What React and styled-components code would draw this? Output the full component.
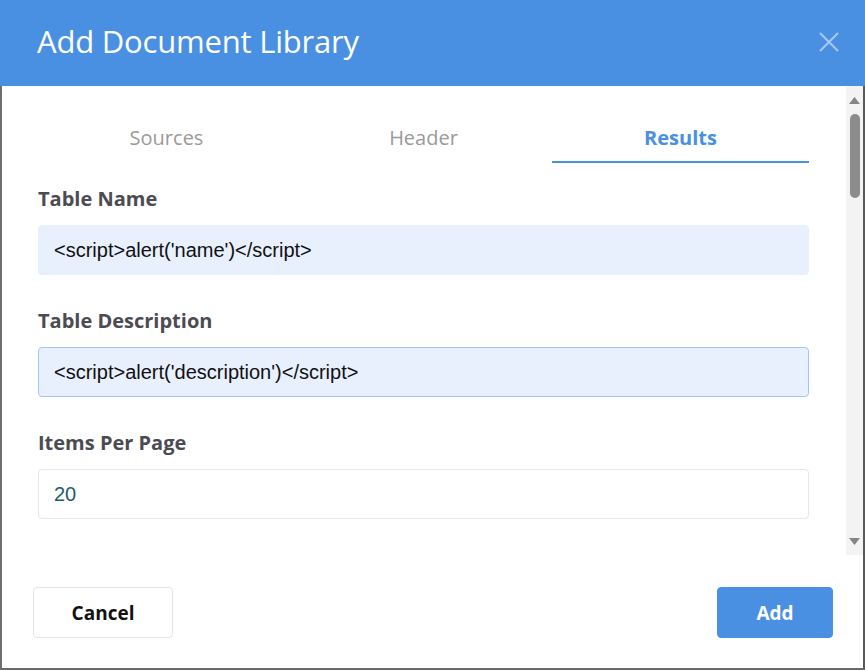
import styled, { createGlobalStyle } from "styled-components";

const GlobalStyle = createGlobalStyle`
  html, body {
    margin: 0;
    padding: 0;
    background: #fff;
  }
  * {
    box-sizing: border-box;
  }
`;

const tabs = ["Sources", "Header", "Results"];

const fields = [
  { label: "Table Name", value: "<script>alert('name')</script>", variant: "filled" },
  { label: "Table Description", value: "<script>alert('description')</script>", variant: "focused" },
  { label: "Items Per Page", value: "20", variant: "plain" },
];

export default function App() {
  return (
    <>
      <GlobalStyle />
      <Dialog>
        <Header>
          <Title>Add Document Library</Title>
          <CloseButton aria-label="Close">
            <svg width="22" height="22" viewBox="0 0 22 22">
              <path d="M2 2 L20 20 M20 2 L2 20" stroke="#a8c8f0" strokeWidth="2" fill="none" />
            </svg>
          </CloseButton>
        </Header>

        <Body>
          <ScrollArea>
            <Content>
              <TabRow>
                {tabs.map((t) => (
                  <Tab key={t} active={t === "Results"}>{t}</Tab>
                ))}
              </TabRow>

              {fields.map((f) => (
                <Field key={f.label}>
                  <Label>{f.label}</Label>
                  <Input variant={f.variant}>{f.value}</Input>
                </Field>
              ))}
            </Content>

            <Scrollbar>
              <Arrow>
                <svg width="11" height="7" viewBox="0 0 11 7"><path d="M5.5 0 L11 7 L0 7 Z" fill="#858585" /></svg>
              </Arrow>
              <Thumb />
              <Track />
              <Arrow>
                <svg width="11" height="7" viewBox="0 0 11 7"><path d="M0 0 L11 0 L5.5 7 Z" fill="#858585" /></svg>
              </Arrow>
            </Scrollbar>
          </ScrollArea>

          <Footer>
            <Button>Cancel</Button>
            <Button primary>Add</Button>
          </Footer>
        </Body>
      </Dialog>
    </>
  );
}

const Dialog = styled.div`
  width: 865px;
  height: 670px;
  display: flex;
  flex-direction: column;
  background: #fff;
`;

const Header = styled.div`
  height: 86px;
  flex-shrink: 0;
  background: #4a90e2;
  display: flex;
  align-items: center;
  justify-content: space-between;
  padding: 0 24px 0 37px;
`;

const Title = styled.h1`
  margin: 0 0 4px 0;
  font-family: "Open Sans", "Noto Sans", sans-serif;
  font-weight: 400;
  font-size: 31px;
  letter-spacing: -0.2px;
  color: #fff;
`;

const CloseButton = styled.div`
  display: flex;
  align-items: center;
  justify-content: center;
  width: 24px;
  height: 24px;
  margin-bottom: 2px;
`;

const Body = styled.div`
  flex: 1;
  display: flex;
  flex-direction: column;
  border-left: 2px solid #6e6e6e;
  border-right: 2px solid #5a5a5a;
  border-bottom: 2px solid #6a6a6a;
`;

const ScrollArea = styled.div`
  height: 469px;
  display: flex;
`;

const Content = styled.div`
  flex: 1;
  padding: 25px 37px 0 36px;
`;

const TabRow = styled.div`
  display: grid;
  grid-template-columns: repeat(3, 1fr);
  margin-bottom: 23px;
`;

const Tab = styled.div`
  height: 52px;
  display: flex;
  align-items: center;
  justify-content: center;
  padding-top: 2px;
  font-family: "Open Sans", "Noto Sans", sans-serif;
  font-size: 20px;
  font-weight: ${(p) => (p.active ? 700 : 400)};
  color: ${(p) => (p.active ? "#4a90e2" : "#9a9a9a")};
  border-bottom: 2px solid ${(p) => (p.active ? "#4a90e2" : "transparent")};
`;

const Field = styled.div`
  display: flex;
  flex-direction: column;
  margin-bottom: 33px;
`;

const Label = styled.label`
  height: 26px;
  line-height: 26px;
  margin-bottom: 13px;
  font-family: "Open Sans", "Noto Sans", sans-serif;
  font-size: 20px;
  font-weight: 700;
  color: #4b4b52;
`;

const Input = styled.div`
  height: 50px;
  display: flex;
  align-items: center;
  padding: 0 15px;
  border-radius: 4px;
  font-family: "Liberation Sans", Arial, sans-serif;
  font-size: 20px;
  color: ${(p) => (p.variant === "plain" ? "#1b5d6c" : "#111")};
  background: ${(p) => (p.variant === "plain" ? "#fff" : "#e8f0fe")};
  border: 1px solid
    ${(p) =>
      p.variant === "focused" ? "#a3c6f2" : p.variant === "plain" ? "#e6e6e6" : "#e8f0fe"};
`;

const Scrollbar = styled.div`
  width: 17px;
  background: #f3f3f3;
  display: flex;
  flex-direction: column;
  align-items: center;
  padding: 10px 0 9px;
`;

const Arrow = styled.div`
  height: 9px;
  display: flex;
  align-items: center;
  justify-content: center;
`;

const Thumb = styled.div`
  width: 10px;
  height: 84px;
  margin-top: 9px;
  border-radius: 5px;
  background: #8c8c8c;
`;

const Track = styled.div`
  flex: 1;
`;

const Footer = styled.div`
  flex: 1;
  display: flex;
  justify-content: space-between;
  align-items: flex-start;
  padding: 32px 30px 0 31px;
`;

const Button = styled.button`
  height: 51px;
  width: ${(p) => (p.primary ? "116px" : "140px")};
  border-radius: 4px;
  border: 1px solid ${(p) => (p.primary ? "#4a90e2" : "#e4e4e4")};
  background: ${(p) => (p.primary ? "#4a90e2" : "#fff")};
  color: ${(p) => (p.primary ? "#fff" : "#111")};
  font-family: "Open Sans", "Noto Sans", sans-serif;
  font-size: 19px;
  font-weight: 700;
  cursor: pointer;
`;
